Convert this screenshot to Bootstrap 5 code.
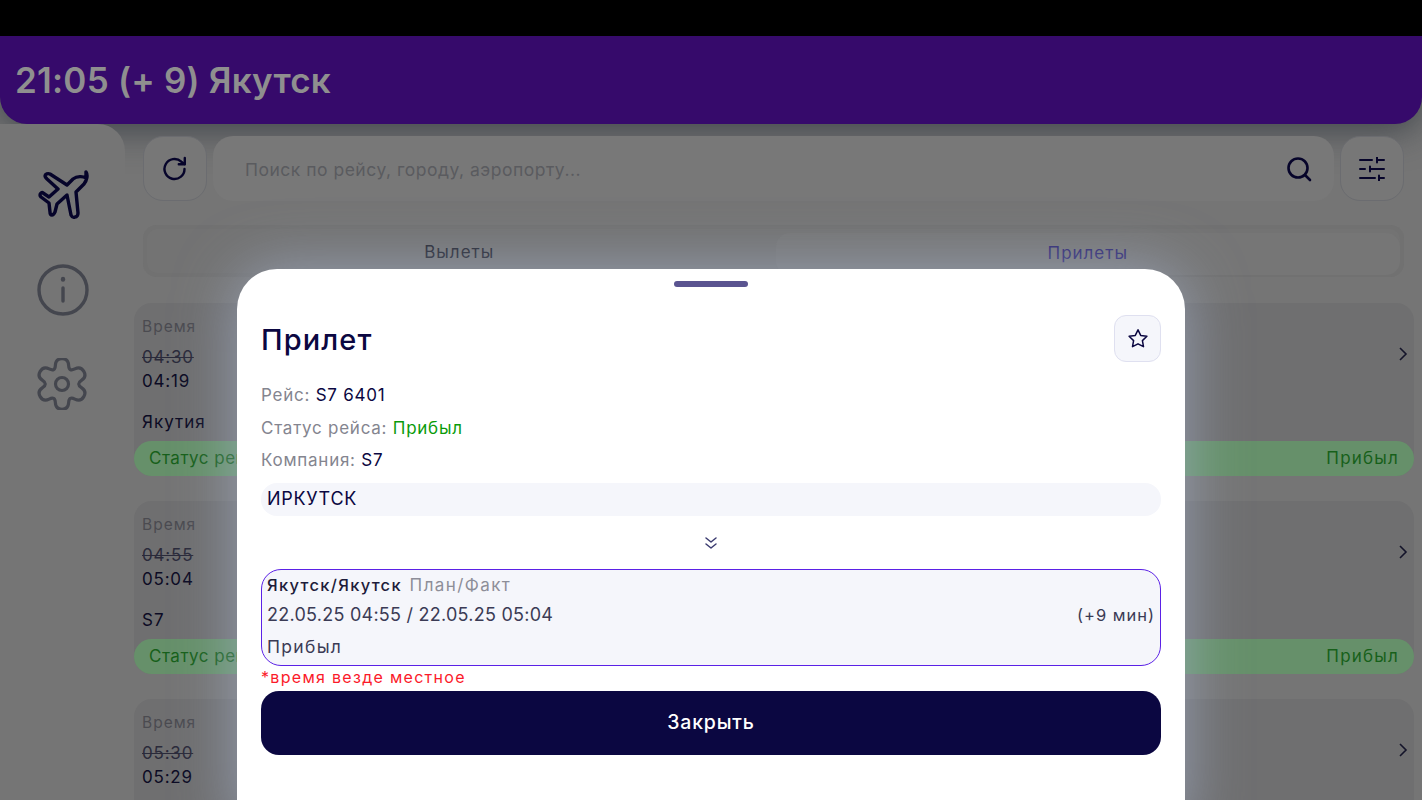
<!DOCTYPE html>
<html lang="ru">
<head>
  <meta charset="UTF-8">
  <meta name="viewport" content="width=device-width, initial-scale=1.0">
  <title>Табло Якутск</title>
  <link href="https://cdn.jsdelivr.net/npm/bootstrap@5.3.0/dist/css/bootstrap.min.css" rel="stylesheet">
  <style>
    html, body { height: 800px; overflow: hidden; }
    body { background: #000; font-family: "Inter", "Liberation Sans", sans-serif; color: #0b0741; }
    .status-strip { height: 36px; background: #000; }
    .app-shell { position: relative; height: 764px; background: #757575; overflow: hidden; }
    .top-head { position: relative; height: 88px; background: #360a6b; border-radius: 0 0 27px 27px; padding: 0 15px; box-shadow: 0 6px 36px rgba(45,52,60,.75); font-size: 35px; font-weight: 600; letter-spacing: .2px; color: #8f8f8f; line-height: 88px; }
    .work-area { height: 676px; }
    .side-rail { position: relative; width: 125px; flex: none; background: #757575; border-radius: 0 27px 0 0; padding: 46px 0 0 37px; }
    .rail-ico { display: block; height: 52px; margin-bottom: 42px; }
    .plane-ico { margin-left: -1px; }
    .gear-ico { margin: 2px 0 0 -3px; }
    .main-col { position: relative; flex: 1; padding: 12px 8px 0 9px; }
    .tool-row { margin-right: 10px; }
    .tool-btn { width: 64px; height: 65px; flex: none; margin-left: 9px; border-radius: 20px; background: #777; border: 1px solid #6b6c70; }
    .filter-btn { margin-left: 0; }
    .search-box { flex: 1; height: 65px; border-radius: 20px; background: #787878; padding: 0 22px 0 32px; font-size: 17.5px; letter-spacing: .5px; color: #5a5b5f; margin: 0 6px; }
    .search-box span { padding-top: 3px; }
    .tab-bar { margin: 24px 10px 26px 9px; height: 52px; border-radius: 14px; background: #737373; box-shadow: inset 0 0 0 4px #717171; font-size: 17px; letter-spacing: 1px; padding-top: 3px; }
    .tab-one { color: #24252f; flex: 1; padding-left: 4px; }
    .tab-two { color: #2e2870; flex: 1; background: #767676; border-radius: 14px; margin: 5px 4px 2px; }
    .fl-card { height: 173px; margin-bottom: 25px; border-radius: 18px; background: #6f6f70; position: relative; padding: 14px 8px 0; font-size: 17px; letter-spacing: .8px; color: #0c0b24; }
    .fl-lbl { color: #4b4b50; font-size: 15.5px; letter-spacing: 1px; line-height: 20px; margin-bottom: 8px; }
    .fl-time { line-height: 24px; }
    .fl-old { color: #2a2a3a; text-decoration: line-through; }
    .fl-air { margin-top: 17px; line-height: 24px; letter-spacing: 1px; }
    .fl-status { position: absolute; left: 0; right: 0; bottom: 0; height: 35px; border-radius: 18px; background: #66906a; color: #17601a; padding: 0 15px; font-size: 17px; letter-spacing: .5px; }
    .fl-status span + span { letter-spacing: 1.2px; }
    .fl-arrow { position: absolute; right: 6px; top: 43px; }
    .sheet-shade { position: absolute; left: 237px; top: 233px; width: 948px; height: 560px; background: #fff; border-radius: 40px 40px 0 0; box-shadow: 0 0 60px rgba(175,190,220,.6); padding: 12px 24px 0; }
    .drag-handle { width: 74px; height: 6px; border-radius: 3px; background: #5a5490; margin: 0 auto 27px; }
    .sheet-top { margin-bottom: 20px; }
    .sheet-title { font-size: 29px; font-weight: 500; letter-spacing: 1.1px; line-height: 47px; padding-top: 2px; color: #0b0741; margin: 0; }
    .star-btn { width: 47px; height: 47px; border-radius: 12px; background: #f5f6fb; border: 1px solid #dfe0f0; }
    .info-line { font-size: 17px; letter-spacing: .75px; line-height: 24px; margin-bottom: 8.5px; color: #84858f; }
    .info-line b { font-weight: 400; color: #0b0741; }
    .info-line .ok-text { color: #0a9b0a; }
    .city-row { height: 33px; border-radius: 16px; background: #f5f6fb; padding: 0 6px; line-height: 31px; font-size: 18px; letter-spacing: .7px; margin-top: 11px; }
    .more-arrow { height: 53px; }
    .time-box { height: 97px; border: 1px solid #5b21e6; border-radius: 20px; background: #f5f6fb; padding: 3px 5px; }
    .time-top { font-size: 16.5px; letter-spacing: 1.3px; line-height: 24px; font-weight: 500; color: #1d1c3a; }
    .time-top span { color: #8d8e98; font-weight: 400; font-size: 17px; letter-spacing: 1.4px; margin-left: 2px; }
    .time-mid { font-size: 18px; letter-spacing: .25px; line-height: 24px; margin-top: 6px; color: #3b3b55; }
    .time-mid small { font-size: 16.5px; letter-spacing: 1px; }
    .time-low { font-size: 17.5px; letter-spacing: 1.3px; line-height: 24px; margin-top: 8px; color: #3b3b55; }
    .local-note { color: #fb1a2a; font-size: 16px; letter-spacing: 1.3px; line-height: 21px; padding-top: 1px; }
    .close-btn { display: block; width: 100%; height: 64px; margin-top: 3px; border: 0; border-radius: 18px; background: #0b0741; color: #fff; font-size: 19.5px; letter-spacing: .8px; font-weight: 500; }
  </style>
</head>
<body>
  <div class="status-strip"></div>
  <div class="app-shell">
    <div class="top-head">21:05 (+ 9) Якутск</div>
    <div class="work-area d-flex">
      <div class="side-rail">
        <svg class="rail-ico plane-ico" width="56" height="50" viewBox="0 0 56 50" fill="none" stroke="#06042a" stroke-width="3.4" stroke-linejoin="round"><path d="M50 7c-3-2-9-2-13 1l-6 6L14 3c-2-1-5 0-5 2 0 1 1 2 2 3l11 10-9 8-6-4c-1-1-3 0-3 2 0 1 1 2 1 2l8 6 1 9c0 2 1 3 2 3s2-1 3-3l2-8 10-9 4 20c1 2 2 3 4 2 2 0 3-2 3-4l-2-21 8-8c3-4 4-9 2-12z"/></svg>
        <svg class="rail-ico" width="52" height="52" viewBox="0 0 52 52" fill="none" stroke="#44464e" stroke-width="3.4" stroke-linecap="round"><circle cx="26" cy="26" r="24"/><path d="M26 24v13"/><path d="M26 15v.5" stroke-width="4.4"/></svg>
        <svg class="rail-ico gear-ico" width="56" height="56" viewBox="-2 -2 56 56" fill="none" stroke="#44464e" stroke-width="3.4" stroke-linejoin="round"><path d="M33.15 5.9Q32.8-1.2 26-1.2Q19.2-1.2 18.85 5.9Q18.5 13 12.2 9.75Q5.9 6.5 2.5 12.4Q-.9 18.3 5.05 22.15Q11 26 5.05 29.85Q-.9 33.7 2.5 39.6Q5.9 45.5 12.2 42.25Q18.5 39 18.85 46.1Q19.2 53.2 26 53.2Q32.8 53.2 33.15 46.1Q33.5 39 39.8 42.25Q46.1 45.5 49.5 39.6Q52.9 33.7 46.95 29.85Q41 26 46.95 22.15Q52.9 18.3 49.5 12.4Q46.1 6.5 39.8 9.75Q33.5 13 33.15 5.9Z"/><circle cx="26" cy="26" r="7"/></svg>
      </div>
      <div class="main-col">
        <div class="tool-row d-flex">
          <div class="tool-btn d-flex align-items-center justify-content-center">
            <svg width="26" height="26" viewBox="0 0 26 26" fill="none" stroke="#06042a" stroke-width="2.4" stroke-linecap="round" stroke-linejoin="round"><path d="M22.5 13a10 10 0 1 1-3.2-7.3L22.5 8"/><path d="M22.8 2v6.2h-6"/></svg>
          </div>
          <div class="search-box d-flex align-items-center justify-content-between">
            <span>Поиск по рейсу, городу, аэропорту...</span>
            <svg width="26" height="26" viewBox="0 0 26 26" fill="none" stroke="#06042a" stroke-width="2.6" stroke-linecap="round"><circle cx="12" cy="12" r="9.5"/><path d="M19 19l5 5"/></svg>
          </div>
          <div class="tool-btn filter-btn d-flex align-items-center justify-content-center">
            <svg width="26" height="24" viewBox="0 0 26 24" fill="none" stroke="#06042a" stroke-width="2" stroke-linecap="round"><path d="M1 3h12M18 3h7M18 .5v5M1 12h5M11 12h14M11 9.5v5M1 21h15M20 21h5M20 18.500v5"/></svg>
          </div>
        </div>
        <div class="tab-bar d-flex text-center align-items-center">
          <div class="tab-one">Вылеты</div>
          <div class="tab-two py-2">Прилеты</div>
        </div>
        <div class="fl-card">
          <div class="fl-lbl">Время</div>
          <div class="fl-time fl-old">04:30</div>
          <div class="fl-time">04:19</div>
          <div class="fl-air">Якутия</div>
          <svg class="fl-arrow" width="10" height="16" viewBox="0 0 10 16" fill="none" stroke="#14142a" stroke-width="1.6"><path d="M2 2l6 6-6 6"/></svg>
          <div class="fl-status d-flex align-items-center justify-content-between"><span>Статус рейса</span><span>Прибыл</span></div>
        </div>
        <div class="fl-card">
          <div class="fl-lbl">Время</div>
          <div class="fl-time fl-old">04:55</div>
          <div class="fl-time">05:04</div>
          <div class="fl-air">S7</div>
          <svg class="fl-arrow" width="10" height="16" viewBox="0 0 10 16" fill="none" stroke="#14142a" stroke-width="1.6"><path d="M2 2l6 6-6 6"/></svg>
          <div class="fl-status d-flex align-items-center justify-content-between"><span>Статус рейса</span><span>Прибыл</span></div>
        </div>
        <div class="fl-card">
          <div class="fl-lbl">Время</div>
          <div class="fl-time fl-old">05:30</div>
          <div class="fl-time">05:29</div>
          <svg class="fl-arrow" width="10" height="16" viewBox="0 0 10 16" fill="none" stroke="#14142a" stroke-width="1.6"><path d="M2 2l6 6-6 6"/></svg>
        </div>
      </div>
    </div>
    <div class="sheet-shade">
      <div class="drag-handle"></div>
      <div class="sheet-top d-flex justify-content-between align-items-center">
        <h2 class="sheet-title">Прилет</h2>
        <div class="star-btn d-flex align-items-center justify-content-center">
          <svg width="22" height="22" viewBox="0 0 22 22" fill="none" stroke="#0b0741" stroke-width="1.5" stroke-linejoin="round"><path d="M11 1.800l2.700 5.600 6.200.9-4.500 4.300 1.100 6.100-5.500-2.900-5.500 2.900 1.100-6.100L2.100 8.300l6.200-.9z"/></svg>
        </div>
      </div>
      <div class="info-line">Рейс: <b>S7 6401</b></div>
      <div class="info-line">Статус рейса: <span class="ok-text">Прибыл</span></div>
      <div class="info-line">Компания: <b>S7</b></div>
      <div class="city-row">ИРКУТСК</div>
      <div class="more-arrow d-flex align-items-center justify-content-center">
        <svg width="14" height="14" viewBox="0 0 14 14" fill="none" stroke="#3b3b70" stroke-width="1.500" stroke-linecap="round" stroke-linejoin="round"><path d="M2 2l5 4 5-4M2 8l5 4 5-4"/></svg>
      </div>
      <div class="time-box">
        <div class="time-top">Якутск/Якутск <span>План/Факт</span></div>
        <div class="time-mid d-flex justify-content-between align-items-center"><span>22.05.25 04:55 / 22.05.25 05:04</span><small>(+9 мин)</small></div>
        <div class="time-low">Прибыл</div>
      </div>
      <div class="local-note">*время везде местное</div>
      <button class="close-btn" type="button">Закрыть</button>
    </div>
  </div>
  <script src="https://cdn.jsdelivr.net/npm/bootstrap@5.3.0/dist/js/bootstrap.bundle.min.js"></script>
</body>
</html>
